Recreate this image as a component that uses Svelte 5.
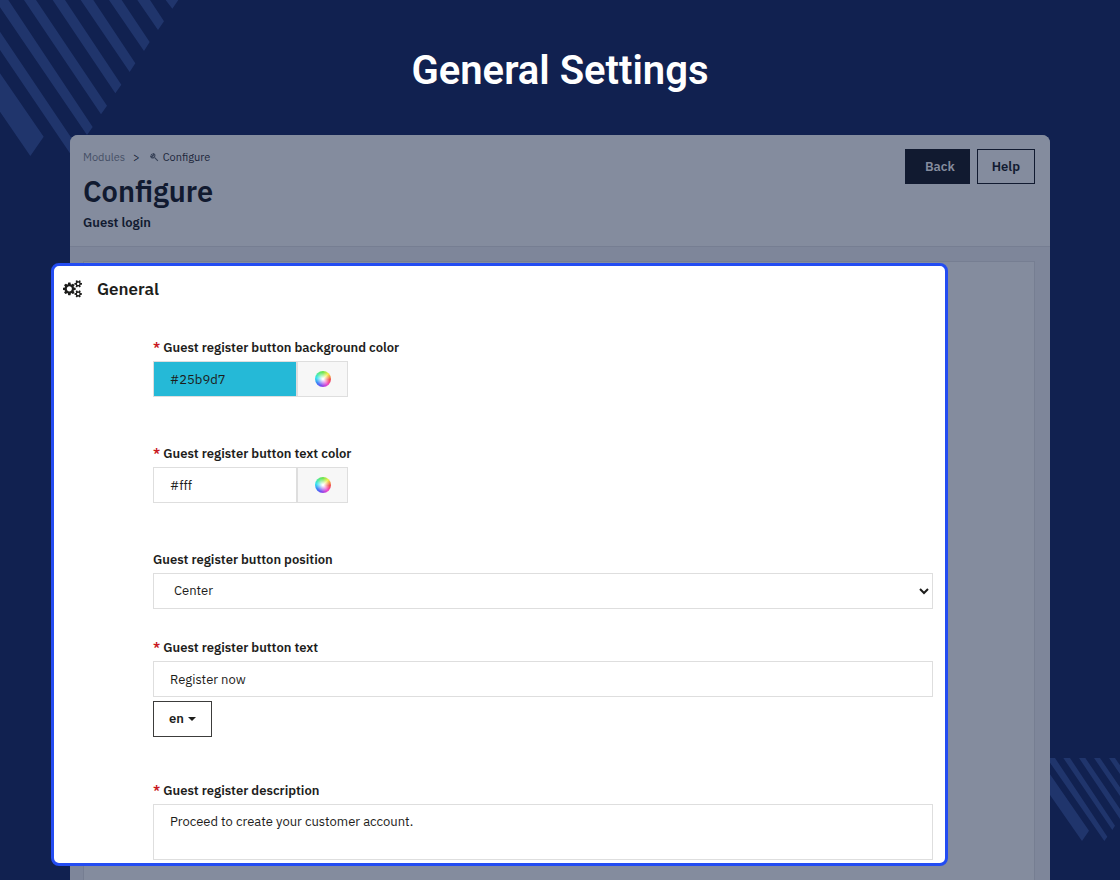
<script lang="ts">
	let backgroundColor = '#25b9d7';
	let textColor = '#fff';
	let position = 'Center';
	let buttonText = 'Register now';
	let description = 'Proceed to create your customer account.';
</script>

<div class="scene">
	<svg class="stripes stripes-top" viewBox="0 0 540 480" aria-hidden="true">
		<path
			d="M0 220L131 410L91 468L0 335ZM0 95L235 445L217 470L0 150ZM0 0H25L278 381L261 405L0 22ZM72 0H108L321 317L303 343ZM158 0H195L364 254L346 280ZM242 0H280L406 190L389 216ZM327 0H365L449 126L432 153ZM412 0H450L492 64L474 90ZM497 0H535L517 26Z"
		/>
	</svg>
	<svg class="stripes stripes-bottom" viewBox="0 0 210 252" aria-hidden="true">
		<path
			d="M0 49L117 218L96 249L0 111ZM0 0H15L172 236L163 249L0 14ZM40 0H60L195 203L187 216ZM87 0H106L210 153V183ZM132 0H150L210 88V114ZM177 0H195L210 22V48Z"
		/>
	</svg>

	<h1>General Settings</h1>

	<main class="stage">
		<div class="backdrop">
			<header class="page-head">
				<div>
					<nav class="breadcrumb" aria-label="Breadcrumb">
						<a href="#modules">Modules</a>
						<span class="separator">&gt;</span>
						<a class="current" href="#configure">
							<svg viewBox="0 0 24 24" aria-hidden="true">
								<path
									d="M3 3L8 8M8.500 1.500C12 2 14 5.500 12.500 9L9.500 12.500C6 14 2 12 1.500 8.500L5.500 9.500L9.500 5.500ZM12.500 12.500L21 21"
								/>
							</svg>
							Configure
						</a>
					</nav>
					<h2>Configure</h2>
					<p>Guest login</p>
				</div>
				<div class="actions">
					<button class="back" type="button">Back</button>
					<button class="help" type="button">Help</button>
				</div>
			</header>
			<div class="page-body">
				<div class="panel"></div>
			</div>
		</div>

		<section class="card">
			<h3>
				<svg viewBox="0 0 1920 1792" aria-hidden="true">
					<path
						d="M896 896q0-106-75-181t-181-75-181 75-75 181 75 181 181 75 181-75 75-181zm768 512q0-52-38-90t-90-38-90 38-38 90q0 53 37.5 90.5t90.5 37.5 90.5-37.5 37.5-90.5zm0-1024q0-52-38-90t-90-38-90 38-38 90q0 53 37.5 90.5t90.5 37.5 90.5-37.5 37.5-90.5zm-384 421v185q0 10-7 19.5t-16 10.5l-155 24q-11 35-32 76 34 48 90 115 7 11 7 20 0 12-7 19-23 30-82.5 89.5t-78.5 59.5q-11 0-21-7l-115-90q-37 19-77 31-11 108-23 155-7 24-30 24h-186q-11 0-20-7.5t-10-17.500l-23-153q-34-10-75-31l-118 89q-7 7-20 7-11 0-21-8-144-133-144-160 0-9 7-19 10-14 41-53t47-61q-23-44-35-82l-152-24q-10-1-17-9.500t-7-19.500v-185q0-10 7-19.500t16-10.500l155-24q11-35 32-76-34-48-90-115-7-11-7-20 0-12 7-20 22-30 82-89t79-59q11 0 21 7l115 90q34-18 77-32 11-108 23-154 7-24 30-24h186q11 0 20 7.500t10 17.500l23 153q34 10 75 31l118-89q8-7 20-7 11 0 21 8 144 133 144 160 0 8-7 19-12 16-42 54t-45 60q23 48 34 82l152 23q10 2 17 10.500t7 19.500zm640 533v140q0 16-149 31-12 27-30 52 51 113 51 138 0 4-4 7-122 71-124 71-8 0-46-47t-52-68q-20 2-30 2t-30-2q-14 21-52 68t-46 47q-2 0-124-71-4-3-4-7 0-25 51-138-18-25-30-52-149-15-149-31v-140q0-16 149-31 13-29 30-52-51-113-51-138 0-4 4-7 4-2 35-20t59-34 30-16q8 0 46 46.500t52 67.500q20-2 30-2t30 2q51-71 92-112l6-2q4 0 124 70 4 3 4 7 0 25-51 138 17 23 30 52 149 15 149 31zm0-1024v140q0 16-149 31-12 27-30 52 51 113 51 138 0 4-4 7-122 71-124 71-8 0-46-47t-52-68q-20 2-30 2t-30-2q-14 21-52 68t-46 47q-2 0-124-71-4-3-4-7 0-25 51-138-18-25-30-52-149-15-149-31v-140q0-16 149-31 13-29 30-52-51-113-51-138 0-4 4-7 4-2 35-20t59-34 30-16q8 0 46 46.500t52 67.500q20-2 30-2t30 2q51-71 92-112l6-2q4 0 124 70 4 3 4 7 0 25-51 138 17 23 30 52 149 15 149 31z"
					/>
				</svg>
				General
			</h3>

			<form>
				<div class="field">
					<label for="bg-color"><span class="required">*</span> Guest register button background color</label>
					<div class="color-group">
						<input id="bg-color" type="text" bind:value={backgroundColor} style="background-color: {backgroundColor}" />
						<button type="button" aria-label="Pick background color"><span class="wheel"></span></button>
					</div>
				</div>

				<div class="field">
					<label for="text-color"><span class="required">*</span> Guest register button text color</label>
					<div class="color-group">
						<input id="text-color" type="text" bind:value={textColor} style="background-color: {textColor}" />
						<button type="button" aria-label="Pick text color"><span class="wheel"></span></button>
					</div>
				</div>

				<div class="field compact">
					<label for="position">Guest register button position</label>
					<div class="select-wrap">
						<select id="position" bind:value={position}>
							<option>Left</option>
							<option>Center</option>
							<option>Right</option>
						</select>
						<svg viewBox="0 0 10 8" aria-hidden="true"><path d="M1 2l4 4 4-4" /></svg>
					</div>
				</div>

				<div class="field translatable">
					<label for="button-text"><span class="required">*</span> Guest register button text</label>
					<input id="button-text" type="text" bind:value={buttonText} />
					<button class="language" type="button">en <span class="caret"></span></button>
				</div>

				<div class="field last">
					<label for="description"><span class="required">*</span> Guest register description</label>
					<textarea id="description" bind:value={description}></textarea>
				</div>
			</form>
		</section>
	</main>
</div>

<style>
	:global(body) {
		margin: 0;
		background: #112150;
	}

	.scene {
		position: relative;
		display: flex;
		flex-direction: column;
		min-height: 100vh;
		overflow: hidden;
		background: #112150;
		color: #1d1d1b;
		font-family: 'IBM Plex Sans', Roboto, sans-serif;
		font-size: 13px;
		line-height: 20px;
	}

	.scene * {
		box-sizing: border-box;
	}

	.stripes {
		position: absolute;
		fill: #20356c;
	}

	.stripes-top {
		top: 0;
		left: 0;
		width: 180px;
	}

	.stripes-bottom {
		top: 758px;
		right: 0;
		width: 70px;
	}

	h1 {
		margin: 0;
		padding: 47px 0 40px;
		color: #fff;
		font-family: Roboto, sans-serif;
		font-size: 40px;
		font-weight: 600;
		line-height: 48px;
		text-align: center;
	}

	.stage {
		position: relative;
		display: flex;
		flex: 1;
		flex-direction: column;
		padding: 0 70px;
	}

	.backdrop {
		display: flex;
		flex: 1;
		flex-direction: column;
		border-radius: 8px 8px 0 0;
		background: #7e869a;
		color: #111a30;
		overflow: hidden;
	}

	.page-head {
		display: flex;
		justify-content: space-between;
		padding: 14px 15px 13px 13px;
		border-bottom: 1px solid #767e92;
		background: #848c9e;
	}

	.breadcrumb {
		display: flex;
		align-items: center;
		gap: 8px;
		font-size: 11px;
		line-height: 16px;
	}

	.breadcrumb a {
		display: flex;
		align-items: center;
		gap: 4px;
		color: #465066;
		text-decoration: none;
	}

	.breadcrumb .current {
		color: #1c263b;
	}

	.breadcrumb svg {
		width: 9px;
		margin-left: 2px;
		fill: none;
		stroke: #394359;
		stroke-width: 3;
	}

	h2 {
		margin: 6px 0 2px;
		font-size: 29px;
		font-weight: 600;
		line-height: 40px;
	}

	.page-head p {
		margin: 0;
		font-weight: 600;
	}

	.actions {
		display: flex;
		align-items: flex-start;
		gap: 7px;
	}

	button,
	input,
	select,
	textarea {
		margin: 0;
		border: 1px solid #dedede;
		border-radius: 0;
		color: inherit;
		font: inherit;
	}

	.actions button {
		height: 35px;
		padding: 0 14px;
		border-color: #111a30;
		background: transparent;
		font-weight: 600;
	}

	.actions .back {
		padding-left: 19px;
		background: #111a30;
		color: #848c9e;
	}

	.page-body {
		display: flex;
		flex: 1;
		padding: 14px 15px 0 13px;
	}

	.panel {
		flex: 1;
		border: 1px solid #767e92;
		border-bottom: 0;
		background: #848c9e;
	}

	.card {
		position: absolute;
		top: 128px;
		right: 172px;
		left: 51px;
		border: 3px solid #234cf2;
		border-radius: 8px;
		background: #fff;
	}

	h3 {
		display: flex;
		align-items: center;
		gap: 15px;
		height: 46px;
		margin: 0;
		padding-left: 9px;
		font-size: 17px;
		font-weight: 600;
	}

	h3 svg {
		width: 19px;
		fill: #1d1d1b;
	}

	form {
		padding: 26px 12px 3px 99px;
	}

	.field {
		display: flex;
		flex-direction: column;
		align-items: flex-start;
		margin-bottom: 47px;
	}

	.field.compact {
		margin-bottom: 29px;
	}

	.field.translatable {
		margin-bottom: 44px;
	}

	.field.last {
		margin-bottom: 0;
	}

	label {
		margin-bottom: 3px;
		font-weight: 600;
	}

	.required {
		color: #c9171e;
	}

	.field > input,
	textarea,
	select {
		width: 100%;
		height: 36px;
		padding: 0 16px;
		background: #fff;
	}

	.color-group {
		display: flex;
	}

	.color-group input {
		width: 144px;
		height: 36px;
		padding: 0 16px;
	}

	.color-group button {
		display: flex;
		align-items: center;
		justify-content: center;
		width: 51px;
		padding: 0;
		background: #f7f7f7;
	}

	.wheel {
		width: 16px;
		height: 16px;
		border-radius: 50%;
		background:
			radial-gradient(circle, #fff 5%, #ffffff00 60%),
			conic-gradient(#6ce34e, #f4ee4c 45deg, #f04a4a 95deg, #f346c8 140deg, #7a48f0 195deg, #3c78f6 230deg, #34e4f0 280deg, #5cea7c 330deg, #6ce34e);
	}

	.select-wrap {
		position: relative;
		width: 100%;
	}

	select {
		display: block;
		padding: 0 20px;
		appearance: none;
	}

	.select-wrap svg {
		position: absolute;
		top: 14px;
		right: 4px;
		width: 10px;
		fill: none;
		stroke: #1d1d1b;
		stroke-width: 2;
		pointer-events: none;
	}

	.language {
		display: flex;
		align-items: center;
		gap: 4px;
		height: 36px;
		margin-top: 4px;
		padding: 0 15px;
		border-color: #3c3c3b;
		background: #fff;
		font-weight: 600;
	}

	.caret {
		border: 4px solid transparent;
		border-top-color: #1d1d1b;
		border-bottom: 0;
	}

	textarea {
		display: block;
		height: 56px;
		padding: 7px 16px;
		resize: none;
	}
</style>
